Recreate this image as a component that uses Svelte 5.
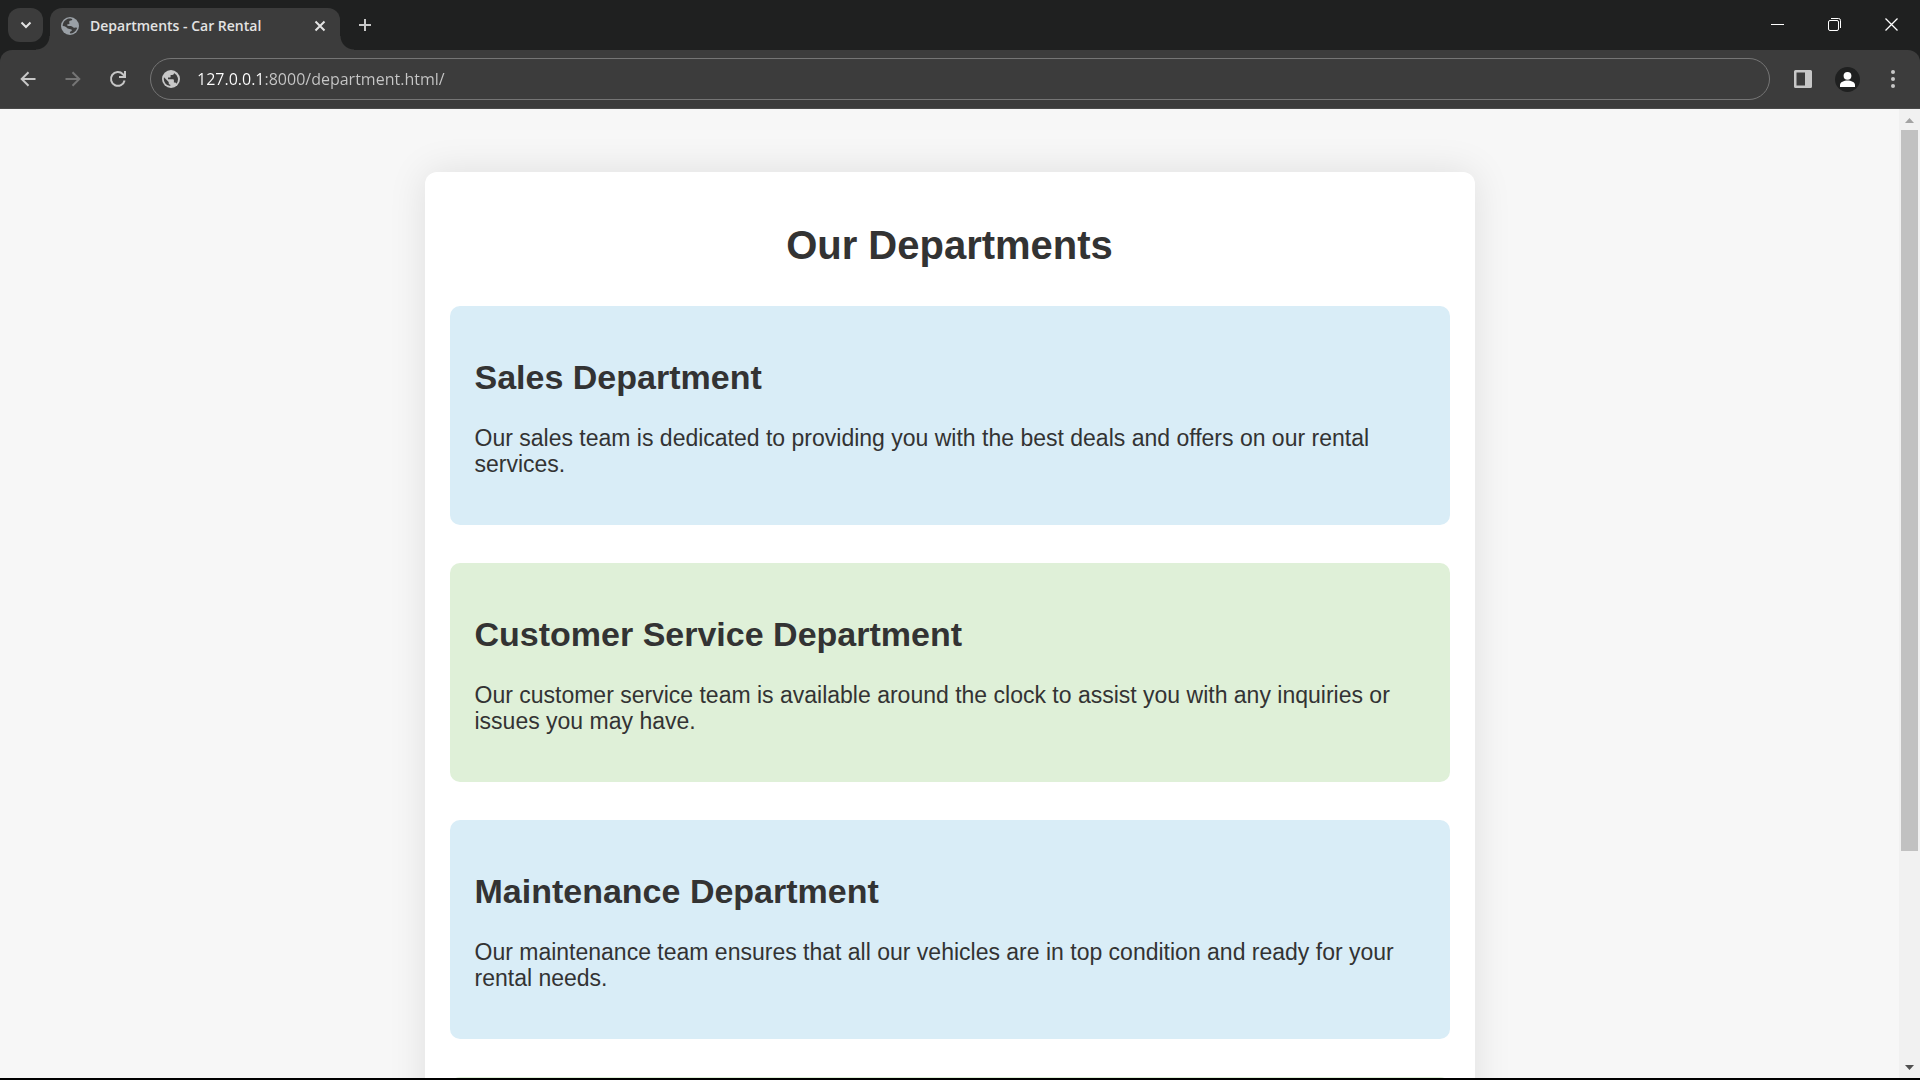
<script>
  const departments = [
    {
      name: 'Sales Department',
      text: 'Our sales team is dedicated to providing you with the best deals and offers on our rental services.'
    },
    {
      name: 'Customer Service Department',
      text: 'Our customer service team is available around the clock to assist you with any inquiries or issues you may have.'
    },
    {
      name: 'Maintenance Department',
      text: 'Our maintenance team ensures that all our vehicles are in top condition and ready for your rental needs.'
    }
  ];
  let url = $state('127.0.0.1:8000/department.html/');
</script>

{#snippet globe()}
  <svg width="18" height="18" viewBox="0 0 18 18" aria-hidden="true">
    <circle cx="9" cy="9" r="9" fill="currentColor" />
    <path class="sea" d="M2 7.3 6.700 12v1c0 1 .7 1.700 1.600 1.700v1.400A7.200 7.200 0 0 1 2 7.300ZM14.400 13.800c-.2-.7-.9-1.200-1.700-1.200h-.8v-2.500c0-.5-.4-.8-.9-.8H6V7.600h1.700c.5 0 .9-.4.9-.9V5h1.700c.9 0 1.700-.8 1.700-1.700v-.4a7.200 7.200 0 0 1 2.400 10.900Z" />
  </svg>
{/snippet}

<div class="browser">
  <header>
    <div class="tabs">
      <button class="search" aria-label="Search tabs">
        <svg width="12" height="12" viewBox="0 0 12 12"><path d="m1.500 3.500 4.500 4.500 4.500-4.500" fill="none" stroke="currentColor" stroke-width="2" /></svg>
      </button>
      <div class="tab">
        <span class="favicon">
          <svg width="18" height="18" viewBox="0 0 18 18" aria-hidden="true">
            <circle cx="9" cy="9" r="9" fill="currentColor" />
            <path class="sea" d="M8 1.600C10 1.200 11.500 2 11.300 2.800 11 3.900 8.700 3.300 8.200 4.500c-.4 1.100.8 1.500.2 2.300-.5.700-1.500.2-2.100.8-.5.600.1 1.500 1.100 1.500 1.900 0 3.400-.2 4.300 1 .6.800 1.700.8 2.800.4l1.700.2c-.7 2.900-3.300 5.500-6.400 5.700-.9 0-1.100-.7-.8-1.400.4-.9 1.900-.8 1.900-1.800 0-1.300-2-.9-3.400-1.400C5.600 11.100 5 9.400 3.500 9.200L1.700 9C1.800 5.200 4.300 2.300 8 1.600Z" />
          </svg>
        </span>
        <span class="title">Departments - Car Rental</span>
        <button class="close" aria-label="Close tab">
          <svg width="12" height="12" viewBox="0 0 12 12"><path d="m1.500 1.500 9 9m0-9-9 9" stroke="currentColor" stroke-width="2" /></svg>
        </button>
      </div>
      <button class="new" aria-label="New tab">
        <svg width="14" height="14" viewBox="0 0 14 14"><path d="M7 1v12M1 7h12" stroke="currentColor" stroke-width="2" /></svg>
      </button>
      <div class="controls">
        <button aria-label="Minimize"><svg width="13" height="13" viewBox="0 0 13 13"><path d="M0 6.500h13" stroke="currentColor" /></svg></button>
        <button aria-label="Restore"><svg width="13" height="13" viewBox="0 0 13 13" fill="none" stroke="currentColor"><rect x=".5" y="2.500" width="10" height="10" rx="1.500" /><path d="M3 .5h7.500a2 2 0 0 1 2 2V10" /></svg></button>
        <button aria-label="Close"><svg width="13" height="13" viewBox="0 0 13 13"><path d="m.5.5 12 12m0-12-12 12" stroke="currentColor" stroke-width="1.300" /></svg></button>
      </div>
    </div>
    <div class="toolbar">
      <button aria-label="Back"><svg width="16" height="16" viewBox="0 0 16 16" fill="none" stroke="currentColor" stroke-width="2"><path d="M15.500 8H2M8.500 1.200 1.700 8l6.800 6.800" /></svg></button>
      <button class="off" aria-label="Forward" disabled><svg width="16" height="16" viewBox="0 0 16 16" fill="none" stroke="currentColor" stroke-width="2"><path d="M.5 8H14M7.500 1.200 14.300 8l-6.800 6.800" /></svg></button>
      <button aria-label="Reload"><svg width="18" height="18" viewBox="0 0 18 18" fill="none" stroke="currentColor" stroke-width="2"><path d="M15.600 10.500A6.900 6.900 0 1 1 13.900 4.200L16 6.300M16 1v6h-6" /></svg></button>
      <label class="address">
        {@render globe()}
        <input type="text" aria-label="Address" spellcheck="false" bind:value={url} />
      </label>
      <button class="panel" aria-label="Side panel"><svg width="18" height="18" viewBox="0 0 18 18"><path fill="currentColor" fill-rule="evenodd" d="M1.500 0h15A1.500 1.500 0 0 1 18 1.500v15a1.500 1.500 0 0 1-1.500 1.500h-15A1.500 1.500 0 0 1 0 16.500v-15A1.500 1.500 0 0 1 1.500 0ZM2.500 2.500v13H11v-13Z" /></svg></button>
      <button aria-label="Profile"><svg width="25" height="25" viewBox="0 0 25 25"><circle cx="12.500" cy="12.500" r="12.500" fill="#1f2020" /><circle cx="12.500" cy="8.800" r="3.900" fill="#fff" /><path d="M5 20v-2c0-3 4-4.500 7.500-4.500S20 15 20 18v2Z" fill="#fff" /></svg></button>
      <button aria-label="Menu"><svg width="4" height="18" viewBox="0 0 4 18" fill="currentColor"><circle cx="2" cy="2" r="2" /><circle cx="2" cy="9" r="2" /><circle cx="2" cy="16" r="2" /></svg></button>
    </div>
  </header>

  <div class="view">
    <main>
      <div class="container">
        <h1>Our Departments</h1>
        {#each departments as d}
          <section>
            <h2>{d.name}</h2>
            <p>{d.text}</p>
          </section>
        {/each}
        <section></section>
      </div>
    </main>
    <div class="scrollbar">
      <button class="up" aria-label="Scroll up"><svg width="9" height="5" viewBox="0 0 9 5"><path d="M4.500 0 9 5H0Z" fill="currentColor" /></svg></button>
      <div class="track"><div class="thumb"></div></div>
      <button class="down" aria-label="Scroll down"><svg width="9" height="5" viewBox="0 0 9 5"><path d="M4.500 5 9 0H0Z" fill="currentColor" /></svg></button>
    </div>
  </div>
</div>

<style>
  :global(body) {
    margin: 0;
    background: #000;
  }
  * {
    box-sizing: border-box;
  }
  .browser {
    display: flex;
    flex-direction: column;
    height: 100vh;
    border-bottom: 2px solid #000;
    font-family: 'Liberation Sans', Arial, sans-serif;
  }
  button {
    display: flex;
    align-items: center;
    justify-content: center;
    flex: none;
    padding: 0;
    border: 0;
    background: none;
    color: inherit;
  }
  svg {
    display: block;
    flex: none;
  }
  .sea {
    fill: #3c3c3c;
  }
  header {
    flex: none;
    background: #1f2020;
    color: #c7c7c7;
    font-family: 'Open Sans', 'Noto Sans', sans-serif;
  }
  .tabs {
    display: flex;
    height: 50px;
    padding: 8px 0 0 8px;
  }
  .search {
    width: 35px;
    height: 34px;
    border-radius: 12px;
    background: #3c3c3c;
    color: #e3e3e3;
  }
  .tab {
    position: relative;
    display: flex;
    align-items: center;
    width: 290px;
    margin-left: 7px;
    padding: 0 11px 7px;
    border-radius: 12px 12px 0 0;
    background: #3c3c3c;
    color: #e3e3e3;
  }
  .tab::before,
  .tab::after {
    content: '';
    position: absolute;
    bottom: 0;
    width: 14px;
    height: 14px;
  }
  .tab::before {
    right: 100%;
    background: radial-gradient(circle at 0 0, transparent 13px, #3c3c3c 14px);
  }
  .tab::after {
    left: 100%;
    background: radial-gradient(circle at 100% 0, transparent 13px, #3c3c3c 14px);
  }
  .favicon {
    color: #9aa0a6;
  }
  .title {
    flex: 1;
    margin-left: 11px;
    font-size: 14px;
    font-weight: 600;
    line-height: 20px;
    white-space: nowrap;
  }
  .close {
    width: 18px;
    height: 18px;
  }
  .new {
    width: 34px;
    height: 34px;
    margin-left: 8px;
  }
  .controls {
    display: flex;
    margin: -8px 0 0 auto;
    color: #fff;
  }
  .controls button {
    width: 57px;
    height: 49px;
  }
  .toolbar {
    display: flex;
    align-items: center;
    height: 59px;
    padding: 0 5px 0 5px;
    border-bottom: 1px solid #4a4a4a;
    border-radius: 12px 12px 0 0;
    background: #3c3c3c;
  }
  .toolbar > button {
    width: 45px;
    height: 42px;
  }
  .toolbar > .off {
    color: #757575;
  }
  .address {
    display: flex;
    flex: 1;
    align-items: center;
    gap: 17px;
    height: 42px;
    margin-left: 10px;
    padding: 0 11px;
    border: 1px solid #757575;
    border-radius: 21px;
  }
  input {
    flex: 1;
    min-width: 0;
    padding: 0;
    border: 0;
    outline: 0;
    background: linear-gradient(to right, #fff 66px, #c7c7c7 66px);
    background-clip: text;
    color: transparent;
    font-family: inherit;
    font-size: 16px;
    line-height: 24px;
  }
  .panel {
    margin-left: 10px;
  }
  .view {
    display: flex;
    flex: 1;
    min-height: 0;
  }
  main {
    flex: 1;
    overflow: hidden;
    padding: 63px 25px 0;
    background: #f7f7f7;
  }
  .container {
    max-width: 1050px;
    margin: 0 auto;
    padding: 25px;
    border-radius: 12px;
    background: #fff;
    box-shadow: 0 0 38px rgba(0, 0, 0, 0.1);
    color: #333;
  }
  h1 {
    margin: 25px 0 37px;
    font-size: 40px;
    line-height: 47px;
    text-align: center;
  }
  section {
    margin-bottom: 38px;
    padding: 25px;
    border-radius: 10px;
    background: #d9edf7;
  }
  section:nth-of-type(even) {
    background: #dff0d8;
  }
  h2 {
    margin: 27px 0 28px;
    font-size: 34px;
    line-height: 39px;
  }
  p {
    margin: 0 0 23px;
    font-size: 23px;
    line-height: 26px;
  }
  .scrollbar {
    display: flex;
    flex-direction: column;
    width: 21px;
    background: #f1f1f1;
  }
  .scrollbar button {
    width: 100%;
    height: 21px;
  }
  .scrollbar .up {
    padding-top: 2px;
    color: #a3a3a3;
  }
  .down {
    color: #505050;
  }
  .track {
    flex: 1;
    padding: 0 2px;
  }
  .thumb {
    height: 77.8%;
    background: #c1c1c1;
  }
</style>
